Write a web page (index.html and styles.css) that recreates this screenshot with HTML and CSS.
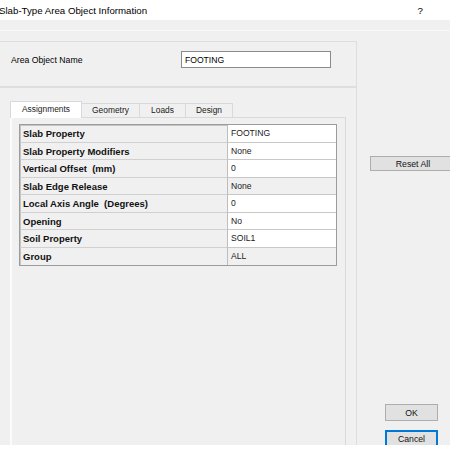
FILE: index.html
```html
<!DOCTYPE html>
<html lang="en">
<head>
    <meta charset="UTF-8">
    <title>Slab-Type Area Object Information</title>
    <link rel="stylesheet" href="styles.css">
</head>
<body>
    <div class="dialog">
        <!-- title bar -->
        <div class="titlebar">
            <span class="title">Slab-Type Area Object Information</span>
            <span class="help">?</span>
        </div>
        <div class="strip"></div>

        <div class="content">
            <div class="main">
                <div class="group name-group">
                    <label class="name-label">Area Object Name</label>
                    <input class="name-input" type="text" value="FOOTING">
                </div>

                <div class="group tabs-group">
                    <div class="tabs">
                        <div class="tab active">Assignments</div>
                        <div class="tab">Geometry</div>
                        <div class="tab">Loads</div>
                        <div class="tab">Design</div>
                    </div>
                    <div class="tab-panel">
                        <div class="grid">
                            <div class="cell label">Slab Property</div>
                            <div class="cell value">FOOTING</div>
                            <div class="cell label">Slab Property Modifiers</div>
                            <div class="cell value">None</div>
                            <div class="cell label">Vertical Offset &nbsp;(mm)</div>
                            <div class="cell value">0</div>
                            <div class="cell label">Slab Edge Release</div>
                            <div class="cell value readonly">None</div>
                            <div class="cell label">Local Axis Angle &nbsp;(Degrees)</div>
                            <div class="cell value">0</div>
                            <div class="cell label">Opening</div>
                            <div class="cell value">No</div>
                            <div class="cell label">Soil Property</div>
                            <div class="cell value">SOIL1</div>
                            <div class="cell label last">Group</div>
                            <div class="cell value readonly last">ALL</div>
                        </div>
                    </div>
                </div>
            </div>

            <div class="side">
                <button class="btn reset">Reset All</button>
                <div class="actions">
                    <button class="btn">OK</button>
                    <button class="btn default">Cancel</button>
                </div>
            </div>
        </div>
    </div>
</body>
</html>
```

FILE: styles.css
```css
* {
    box-sizing: border-box;
    margin: 0;
    padding: 0;
}

body {
    background: #ffffff;
    font-family: "Liberation Sans", Arial, sans-serif;
    font-size: 8.6px;
    color: #000;
}

.dialog {
    width: 450px;
    height: 445px;
    overflow: hidden;
    background: #f0f0f0;
}

.titlebar {
    height: 20px;
    background: #ffffff;
    display: flex;
    align-items: center;
    justify-content: space-between;
    padding-right: 27px;
    font-size: 9.7px;
    color: #000;
}

.title {
    margin-left: -1px;
}

.strip {
    height: 11px;
    border-bottom: 1px solid #f8f8f8;
}

.content {
    display: flex;
}

.main {
    width: 357px;
    flex-shrink: 0;
    padding-top: 10px;
}

.group {
    border: 1px solid #dedede;
    border-left: none;
}

.name-group {
    height: 46px;
    display: flex;
    align-items: flex-start;
    padding: 9px 0 0 11px;
}

.name-label {
    width: 170px;
    line-height: 18px;
    font-size: 8.7px;
}

.name-input {
    width: 150px;
    height: 17px;
    border: 1px solid #8a8a8a;
    background: #fff;
    padding: 0 3px;
    font-family: "Liberation Sans", Arial, sans-serif;
    font-size: 8.6px;
    color: #000;
    outline: none;
}

.tabs-group {
    height: 400px;
    padding: 13px 0 0 10px;
}

.tabs {
    display: flex;
    align-items: flex-end;
    height: 16px;
}

.tab {
    height: 14px;
    line-height: 13px;
    text-align: center;
    border: 1px solid #d9d9d9;
    border-bottom: none;
    margin-left: -1px;
    background: #f0f0f0;
    font-size: 8.4px;
    color: #1a1a1a;
}

.tab:nth-child(1) { width: 72px; margin-left: 0; }
.tab:nth-child(2) { width: 59px; }
.tab:nth-child(3) { width: 47px; }
.tab:nth-child(4) { width: 48px; }

.tab.active {
    height: 17px;
    line-height: 15px;
    background: #ffffff;
    position: relative;
    z-index: 1;
    margin-bottom: -1px;
}

.tab-panel {
    width: 336px;
    height: 360px;
    border: 1px solid #d9d9d9;
    border-left: 2px solid #fbfbfb;
    padding: 6px 0 0 7px;
}

.grid {
    width: 318px;
    display: grid;
    grid-template-columns: 207px 1fr;
    border: 1px solid #9c9c9c;
    box-shadow: inset 1px 1px 0 #c4c4c4;
    background: #f0f0f0;
}

.cell {
    height: 17.5px;
    line-height: 17px;
    padding-left: 3px;
    border-bottom: 1px solid #d0d0d0;
    white-space: nowrap;
    overflow: hidden;
}

.cell.last {
    border-bottom: none;
}

.label {
    font-weight: bold;
    font-size: 9.5px;
    color: #111;
}

.value {
    background: #ffffff;
    border-left: 1px solid #bdbdbd;
    border-bottom-color: #c8c8c8;
    color: #1a1a1a;
}

.value.readonly {
    background: #f0f0f0;
}

.side {
    flex: 1;
    padding: 125px 0 0 13px;
}

.btn {
    display: block;
    height: 15px;
    border: 1px solid #adadad;
    background: #e1e1e1;
    font-family: "Liberation Sans", Arial, sans-serif;
    font-size: 8.7px;
    color: #111;
}

.reset {
    width: 86px;
}

.actions {
    margin-top: 233px;
    padding-left: 15px;
}

.actions .btn {
    width: 53px;
    height: 17px;
}

.actions .btn + .btn {
    margin-top: 9px;
}

.btn.default {
    border: 2px solid #0078d7;
}
```
